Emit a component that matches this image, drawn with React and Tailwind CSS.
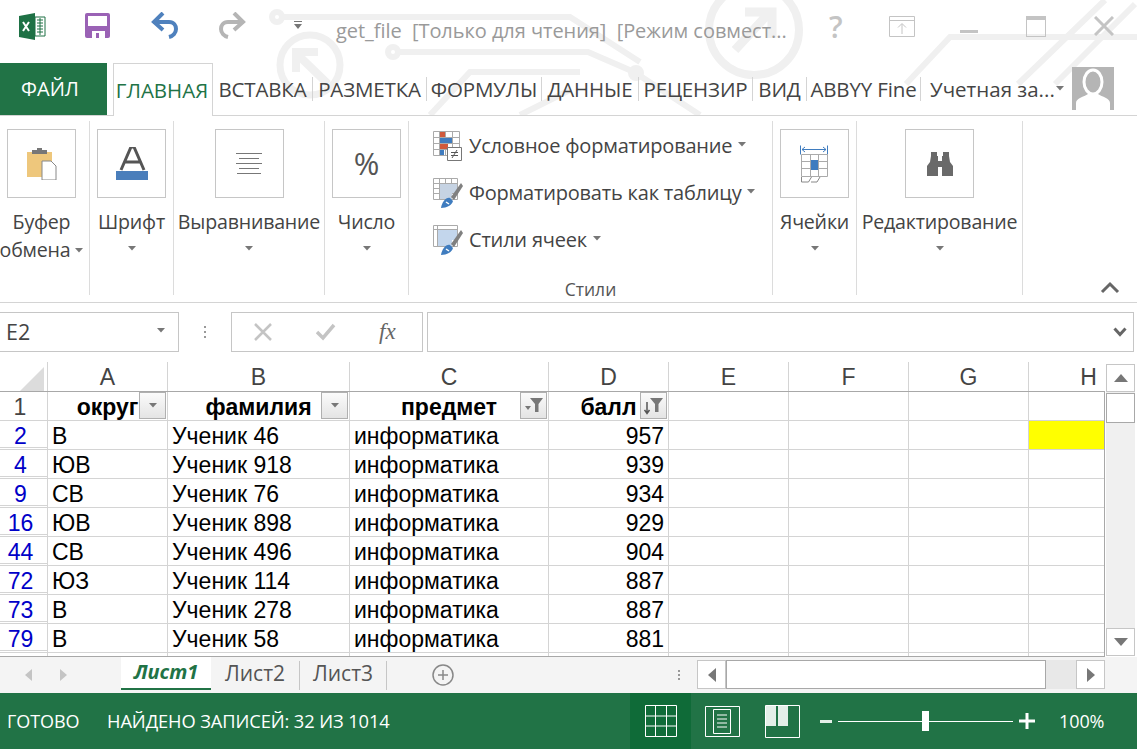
import React from 'react';

const tabs = [
  { label: 'ВСТАВКА', w: 'w-[100px]' },
  { label: 'РАЗМЕТКА', w: 'w-[114px]' },
  { label: 'ФОРМУЛЫ', w: 'w-[115px]' },
  { label: 'ДАННЫЕ', w: 'w-[97px]' },
  { label: 'РЕЦЕНЗИР', w: 'w-[114px]' },
  { label: 'ВИД', w: 'w-[54px]' },
  { label: 'ABBYY Fine', w: 'w-[114px]' },
];

const rows = [
  ['2', 'В', 'Ученик 46', 'информатика', '957'],
  ['4', 'ЮВ', 'Ученик 918', 'информатика', '939'],
  ['9', 'СВ', 'Ученик 76', 'информатика', '934'],
  ['16', 'ЮВ', 'Ученик 898', 'информатика', '929'],
  ['44', 'СВ', 'Ученик 496', 'информатика', '904'],
  ['72', 'ЮЗ', 'Ученик 114', 'информатика', '887'],
  ['73', 'В', 'Ученик 278', 'информатика', '887'],
  ['79', 'В', 'Ученик 58', 'информатика', '881'],
];

const gridCols = 'grid grid-rows-[29px] grid-cols-[48px_120px_182px_199px_120px_120px_120px_120px_120px]';

const Caret = ({ className = '' }) => (
  <svg width="8" height="5" viewBox="0 0 8 5" className={className}>
    <path d="M0 0h8L4 4.5z" fill="#777" />
  </svg>
);

const Watermark = () => (
  <svg className="absolute left-0 top-0 pointer-events-none" width="1137" height="115" viewBox="0 0 1137 115" fill="none" stroke="#f0f0f0" strokeWidth="6">
    <circle cx="277" cy="17" r="5" />
    <path d="M283 17H570L640 62" />
    <circle cx="310" cy="65" r="30" strokeWidth="7" />
    <path d="M328 84L298 55M296 72V52H318" strokeWidth="8" />
    <circle cx="393" cy="52" r="5" />
    <path d="M399 52H588L634 72L700 115" />
    <circle cx="636" cy="73" r="5" />
    <path d="M430 115L470 72H580" />
    <circle cx="754" cy="30" r="45" strokeWidth="8" />
    <path d="M735 50L768 14M745 12H772V38" strokeWidth="9" />
    <path d="M906 84L950 37H1137" />
    <path d="M1018 84L1105 0M1055 84L1135 4" />
    <path d="M520 115L570 90" />
  </svg>
);

const TitleBar = () => (
  <div className="h-[63px] flex items-start relative z-10">
    {/* excel */}
    <svg width="27" height="27" viewBox="0 0 27 27" className="ml-[19px] mt-[13px]">
      <path d="M0 3L16 0V27L0 24z" fill="#1e7145" />
      <path d="M16 4H26V23H16z" fill="#fff" stroke="#1e7145" />
      <path d="M18 7h6M18 10h6M18 13h6M18 16h6M18 19h6M21 5v17" stroke="#1e7145" strokeWidth="1" />
      <path d="M4 9l6 9M10 9l-6 9" stroke="#fff" strokeWidth="2" />
    </svg>
    {/* save */}
    <svg width="26" height="26" viewBox="0 0 26 26" className="ml-[39px] mt-[13px]">
      <rect x="0" y="0" width="25" height="25" rx="2" fill="#9a62b5" />
      <path d="M3 3H22V13H3z" fill="#fff" />
      <path d="M7 18H20V25H7z" fill="#fff" />
      <path d="M11 20H14V25H11z" fill="#9a62b5" />
    </svg>
    {/* undo */}
    <svg width="28" height="28" viewBox="0 0 28 28" className="ml-[40px] mt-[12px]" fill="none">
      <path d="M2 10H18C23 10 25 14 25 17C25 21 22 24 18 25" stroke="#4f81bd" strokeWidth="4" />
      <path d="M12 1L3 10L12 18" stroke="#4f81bd" strokeWidth="4" />
    </svg>
    {/* redo */}
    <svg width="28" height="28" viewBox="0 0 28 28" className="ml-[39px] mt-[12px]" fill="none">
      <path d="M26 10H10C5 10 3 14 3 17C3 21 6 24 10 25" stroke="#b5b5b5" strokeWidth="4" />
      <path d="M16 1L25 10L16 18" stroke="#b5b5b5" strokeWidth="4" />
    </svg>
    <svg width="8" height="9" viewBox="0 0 8 9" className="ml-[48px] mt-[21px]">
      <path d="M0 0h8v1H0zM0 3h8L4 8z" fill="#777" />
    </svg>
    <div className="ml-[34px] mt-[17px] text-[20px] leading-[28px] text-[#9a9a9a] whitespace-pre font-['Open_Sans',sans-serif] tracking-[-0.05px] w-[493px]">
      get_file  [Только для чтения]  [Режим совмест...
    </div>
    <div className="mt-[9px] text-[30px] leading-[36px] font-semibold text-[#c4c4c4] font-['Open_Sans',sans-serif] w-[60px]">?</div>
    <svg width="26" height="21" viewBox="0 0 26 21" className="mt-[16px]" fill="none" stroke="#c4c4c4">
      <path d="M.5.5h25v20H.5zM.5 4.5h25" />
      <path d="M13 18V8M9 11.5L13 7.5L17 11.5" />
    </svg>
    <div className="ml-[45px] mt-[30px] w-[18px] h-[3px] bg-[#c4c4c4]" />
    <div className="ml-[48px] mt-[16px] w-[20px] h-[21px] border border-[#c4c4c4] border-t-[4px]" />
    <svg width="20" height="20" viewBox="0 0 20 20" className="ml-[48px] mt-[16px]" stroke="#c4c4c4" strokeWidth="3">
      <path d="M1 1L19 19M19 1L1 19" />
    </svg>
  </div>
);

const TabBar = () => (
  <div className="h-[53px] flex items-end border-b border-[#d4d4d4] relative z-10 font-['Open_Sans',sans-serif]">
    <div className="w-[107px] h-[52px] bg-[#217346] text-white text-[20px] flex items-center justify-center pb-[1px] pr-[7px]">ФАЙЛ</div>
    <div className="ml-[6px] w-[100px] h-[53px] -mb-[1px] bg-white border border-b-0 border-[#d4d4d4] text-[#217346] text-[20.500px] flex items-center justify-center pr-[2px] whitespace-nowrap">ГЛАВНАЯ</div>
    {tabs.map((t) => (
      <div key={t.label} className={`${t.w} h-[52px] flex items-center`}>
        <div className="w-full h-[24px] border-r border-[#d4d4d4] flex items-center justify-center text-[20.500px] tracking-[-0.15px] text-[#444] whitespace-nowrap">{t.label}</div>
      </div>
    ))}
    <div className="ml-[9px] h-[52px] flex items-center text-[20.500px] text-[#444] whitespace-nowrap">Учетная за...</div>
    <Caret className="ml-[1px] mb-[24px]" />
    <div className="ml-[8px] mb-[5px] w-[42px] h-[43px] bg-[#b5b5b5] overflow-hidden">
      <svg width="42" height="43" viewBox="0 0 42 43">
        <ellipse cx="21" cy="15" rx="9" ry="12" fill="none" stroke="#fff" strokeWidth="3" />
        <path d="M4 43V36C4 31 12 30 16 27H26C30 30 38 31 38 36V43z" fill="#fff" />
      </svg>
    </div>
  </div>
);

const BigBtn = ({ w = 'w-[69px]', children }) => (
  <div className={`${w} h-[69px] border border-[#c6c6c6] flex items-center justify-center shrink-0`}>{children}</div>
);

const Group = ({ w, label, label2, btnClass = '', children }) => (
  <div className={`${w} shrink-0 h-[174px] flex flex-col items-center border-r border-[#dcdcdc]`}>
    <div className={`mt-[8px] ${btnClass}`}>
      <BigBtn>{children}</BigBtn>
    </div>
    <div className={`mt-[10px] text-[19.600px] leading-[28px] text-[#444] tracking-[-0.2px] whitespace-nowrap ${btnClass}`}>{label}</div>
    {label2 ? (
      <div className="flex items-center gap-[5px] text-[19.600px] leading-[28px] text-[#444] tracking-[-0.2px] whitespace-nowrap -ml-[6px]">
        {label2}
        <Caret />
      </div>
    ) : (
      <Caret className="mt-[10px]" />
    )}
  </div>
);

const StyleRow = ({ icon, label }) => (
  <div className="h-[47px] flex items-center text-[20px] tracking-[-0.2px] text-[#444] whitespace-nowrap">
    <div className="w-[36px] shrink-0">{icon}</div>
    {label}
    <Caret className="ml-[6px] mb-[3px]" />
  </div>
);

const Brush = () => (
  <>
    <path d="M28 5L18 19L21 22L30 8z" fill="#808080" />
    <path d="M8 30C9 24 13 19 17 20L20 23C19 27 14 30 8 30z" fill="#3f7cbf" />
    <path d="M13 24L16 26" stroke="#fff" strokeWidth="1.500" />
  </>
);

const Ribbon = () => (
  <div className="h-[187px] border-b border-[#d4d4d4] flex items-start pt-[5px] pl-0 font-['Open_Sans',sans-serif]">
    <Group w="w-[90px]" label="Буфер" label2="обмена" btnClass="-ml-[3px] mr-[3px]">
      <svg width="30" height="32" viewBox="0 0 30 32">
        <path d="M0 4H25V29H0z" fill="#eec77c" />
        <path d="M5 2H20V6H5zM10 0h5v3h-5z" fill="#777" />
        <path d="M15 13H24L29 18V32H15z" fill="#fff" stroke="#888" />
      </svg>
    </Group>
    <Group w="w-[84px]" label="Шрифт">
      <svg width="34" height="34" viewBox="0 0 34 34">
        <path d="M6 23L16 0H19L29 23M10 15H25" fill="none" stroke="#555" strokeWidth="3" />
        <path d="M1 24H33V33H1z" fill="#4a7ebb" />
      </svg>
    </Group>
    <Group w="w-[151px]" label="Выравнивание">
      <svg width="26" height="22" viewBox="0 0 26 22" stroke="#777">
        <path d="M0 .5h26M3 5.500h20M0 10.500h26M3 15.500h20M1 20.500h24" />
      </svg>
    </Group>
    <Group w="w-[84px]" label="Число">
      <span className="text-[31px] text-[#555] leading-none">%</span>
    </Group>
    <div className="w-[364px] shrink-0 h-[174px] border-r border-[#dcdcdc] flex flex-col">
      <div className="pl-[24px] pt-[1px] h-[156px] shrink-0">
        <StyleRow
          label="Условное форматирование"
          icon={
            <svg width="30" height="30" viewBox="0 0 30 30">
              <path d="M.5.500h26v24H.5zM.5 6.500h26M.5 12.500h26M.5 18.500h26M6.500.500v24M12.500.500v24M19.500.500v24" fill="#fff" stroke="#aaa" />
              <path d="M7 1h5v5H7z" fill="#d05a3c" />
              <path d="M7 7h12v5H7z" fill="#3f7cbf" />
              <path d="M7 13h8v5H7z" fill="#d05a3c" />
              <path d="M7 19h4v5H7z" fill="#3f7cbf" />
              <path d="M14.500 16.500h14v13h-14z" fill="#fff" stroke="#777" />
              <path d="M18 21.500h7M18 24.500h7M24 19l-5 8" stroke="#555" fill="none" />
            </svg>
          }
        />
        <StyleRow
          label="Форматировать как таблицу"
          icon={
            <svg width="30" height="30" viewBox="0 0 30 30">
              <path d="M.5.500h24v21H.5zM.5 5.500h24M.5 10.500h24M.5 15.500h24M6.500.500v21M12.500.500v21M18.500.500v21" fill="#fff" stroke="#aaa" />
              <path d="M7 6H24V15H19V21H7z" fill="#c6d3e3" />
              <Brush />
            </svg>
          }
        />
        <StyleRow
          label="Стили ячеек"
          icon={
            <svg width="30" height="30" viewBox="0 0 30 30">
              <path d="M.5.500h24v21H.5zM.5 4.500h24M4.500.500v21" fill="#fff" stroke="#aaa" />
              <path d="M5 5H24V15H19V21H5z" fill="#c3d6ec" />
              <Brush />
            </svg>
          }
        />
      </div>
      <div className="text-center text-[17.500px] leading-[24px] text-[#555] shrink-0">Стили</div>
    </div>
    <Group w="w-[84px]" label="Ячейки">
      <svg width="30" height="40" viewBox="0 0 30 40" fill="none">
        <path d="M2 5.500h24M5 3L2 5.500L5 8M23 3l3 2.500L23 8" stroke="#3f7cbf" />
        <path d="M.5.500v9M27.500.500v9" stroke="#3f7cbf" transform="translate(0 1)" />
        <path d="M1.500 10.500h26v22h-26zM1.500 17.500h26M1.500 24.500h26M10.500 10.500v22M18.500 10.500v22" stroke="#aaa" />
        <path d="M11 16H18V26H11z" fill="#3f7cbf" />
        <path d="M1.500 33v5h7l3-5M11 38h6l3-5" stroke="#888" />
      </svg>
    </Group>
    <Group w="w-[166px]" label="Редактирование">
      <svg width="26" height="24" viewBox="0 0 26 24">
        <path d="M4 0H10V4H11V9H15V4H16V0H22V4L23 10L26 14V24H15V15H11V24H0V14L3 10L4 4z" fill="#6a6a6a" />
        <path d="M12.500 0v5" stroke="#fff" />
      </svg>
    </Group>
    <div className="flex-1 h-[174px] flex items-end justify-end pr-[17px] pb-[1px]">
      <svg width="20" height="13" viewBox="0 0 20 13" fill="none">
        <path d="M2 11L10 3L18 11" stroke="#666" strokeWidth="3" />
      </svg>
    </div>
  </div>
);

const FormulaBar = () => (
  <div className="h-[59px] flex items-center pb-[2px] font-['Open_Sans',sans-serif]">
    <div className="w-[179px] h-[40px] border border-l-0 border-[#c6c6c6] flex items-center justify-between pl-[6px] pr-[13px] pt-[2px] text-[21.500px] text-[#444]">
      E2
      <Caret className="mb-[4px]" />
    </div>
    <div className="w-[52px] flex flex-col items-center gap-[3px]">
      <span className="w-[2px] h-[2px] bg-[#999]" />
      <span className="w-[2px] h-[2px] bg-[#999]" />
      <span className="w-[2px] h-[2px] bg-[#999]" />
    </div>
    <div className="w-[192px] h-[40px] border border-[#c6c6c6] flex items-center pl-[22px]">
      <svg width="18" height="18" viewBox="0 0 18 18" stroke="#c4c4c4" strokeWidth="2.500">
        <path d="M1 1L17 17M17 1L1 17" />
      </svg>
      <svg width="20" height="18" viewBox="0 0 20 18" fill="none" stroke="#c4c4c4" strokeWidth="3.500" className="ml-[44px]">
        <path d="M1 9L7 15L18 2" />
      </svg>
      <span className="ml-[43px] text-[#666] italic text-[23px] leading-none font-['Liberation_Serif',serif]">fx</span>
    </div>
    <div className="ml-[4px] w-[707px] h-[40px] border border-[#c6c6c6] flex items-center justify-end pr-[6px]">
      <svg width="14" height="10" viewBox="0 0 14 10" fill="none">
        <path d="M1.500 1.500L7 7.500L12.500 1.500" stroke="#666" strokeWidth="3" />
      </svg>
    </div>
  </div>
);

const FilterBtn = ({ children }) => (
  <div className="absolute right-[1px] top-0 w-[27px] h-[27px] border border-[#b0b0b0] bg-linear-to-b from-[#fbfbfb] to-[#e4e4e4] flex items-center justify-center">
    {children}
  </div>
);

const FunnelIcon = ({ sort }) => (
  <svg width="20" height="18" viewBox="0 0 20 18">
    <path d="M6 1H19L14.500 7V15H11V7z" fill="#777" />
    {sort ? <path d="M3 5v11M.5 13L3 16.500L5.500 13" fill="none" stroke="#555" strokeWidth="1.500" /> : <path d="M1 9h6L4 13z" fill="#777" />}
  </svg>
);

const Sheet = () => (
  <div className="h-[295px] flex font-['Liberation_Sans',sans-serif]">
    <div className="w-[1105px] overflow-hidden">
      {/* column letters */}
      <div className={`${gridCols} h-[29px] text-[23px] leading-[30px] text-[#444] text-center`}>
        <div className="border-r border-[#d4d4d4] relative overflow-hidden">
          <svg width="24" height="24" viewBox="0 0 24 24" className="absolute right-[3px] bottom-0">
            <path d="M24 0V24H0z" fill="#dcdcdc" />
          </svg>
        </div>
        {['A', 'B', 'C', 'D', 'E', 'F', 'G', 'H'].map((c) => (
          <div key={c} className="border-r border-[#d4d4d4]">{c}</div>
        ))}
      </div>
      <div className="h-[266px] border-t border-b border-r border-[#a8a8a8] overflow-hidden text-[23px] text-black">
        {/* header row */}
        <div className={`${gridCols} h-[29px] leading-[30px]`}>
          <div className="text-[#444] text-center pr-[7px] border-r border-b border-[#d4d4d4]">1</div>
          {[
            { t: 'округ', icon: <Caret /> },
            { t: 'фамилия', icon: <Caret /> },
            { t: 'предмет', icon: <FunnelIcon /> },
            { t: 'балл', icon: <FunnelIcon sort /> },
          ].map((h) => (
            <div key={h.t} className="relative font-bold text-center border-r border-b border-[#d4d4d4] overflow-hidden">
              {h.t}
              <FilterBtn>{h.icon}</FilterBtn>
            </div>
          ))}
          {[0, 1, 2, 3].map((i) => (
            <div key={i} className="border-r border-b border-[#d4d4d4]" />
          ))}
        </div>
        {rows.map((r, idx) => (
          <div key={r[0]} className={`${gridCols} h-[29px] leading-[30px]`}>
            <div className="text-[#0000c8] text-center pr-[6px] border-r border-b-[3px] border-double border-[#d4d4d4]">{r[0]}</div>
            <div className="pl-[4px] border-r border-b border-[#d4d4d4]">{r[1]}</div>
            <div className="pl-[4px] border-r border-b border-[#d4d4d4]">{r[2]}</div>
            <div className="pl-[4px] border-r border-b border-[#d4d4d4]">{r[3]}</div>
            <div className="pr-[4px] text-right border-r border-b border-[#d4d4d4]">{r[4]}</div>
            <div className="border-r border-b border-[#d4d4d4]" />
            <div className="border-r border-b border-[#d4d4d4]" />
            <div className="border-r border-b border-[#d4d4d4]" />
            <div className={`border-b border-[#d4d4d4] ${idx === 0 ? 'bg-[#ffff00]' : ''}`} />
          </div>
        ))}
        <div className={`${gridCols} h-[29px]`}>
          {[0, 1, 2, 3, 4, 5, 6, 7].map((i) => (
            <div key={i} className="border-r border-[#d4d4d4]" />
          ))}
        </div>
      </div>
    </div>
    {/* vertical scrollbar */}
    <div className="w-[32px] flex flex-col pl-[1px] pr-[2px] pt-[2px] pb-[1px]">
      <div className="h-[28px] border border-[#c6c6c6] flex items-center justify-center">
        <svg width="14" height="8" viewBox="0 0 14 8"><path d="M7 0L14 8H0z" fill="#777" /></svg>
      </div>
      <div className="flex-1 bg-[#f0f0f0] pt-[1px]">
        <div className="h-[30px] bg-white border border-[#a8a8a8]" />
      </div>
      <div className="h-[28px] border border-[#c6c6c6] flex items-center justify-center">
        <svg width="14" height="8" viewBox="0 0 14 8"><path d="M0 0H14L7 8z" fill="#777" /></svg>
      </div>
    </div>
  </div>
);

const SheetTabs = () => (
  <div className="h-[36px] bg-[#f4f4f4] flex items-start font-['Open_Sans',sans-serif]">
    <svg width="7" height="12" viewBox="0 0 7 12" className="ml-[25px] mt-[12px]"><path d="M7 0V12L0 6z" fill="#c4c4c4" /></svg>
    <svg width="7" height="12" viewBox="0 0 7 12" className="ml-[28px] mt-[12px]"><path d="M0 0V12L7 6z" fill="#c4c4c4" /></svg>
    <div className="ml-[54px] w-[90px] h-[33px] bg-white border-b-[2px] border-[#217346] text-[#217346] font-bold italic text-[20px] leading-[30px] text-center">Лист1</div>
    <div className="w-[89px] h-[29px] mt-[4px] border-r border-[#c6c6c6] text-[21px] leading-[24px] text-[#555] text-center">Лист2</div>
    <div className="w-[87px] h-[29px] mt-[4px] border-r border-[#c6c6c6] text-[21px] leading-[24px] text-[#555] text-center">Лист3</div>
    <svg width="22" height="22" viewBox="0 0 22 22" className="ml-[45px] mt-[7px]" fill="none" stroke="#888">
      <circle cx="11" cy="11" r="10" strokeWidth="1.500" />
      <path d="M11 6V16M6 11H16" strokeWidth="1.500" />
    </svg>
    <div className="ml-[224px] mt-[13px] flex flex-col gap-[2px]">
      <span className="w-[2px] h-[2px] bg-[#999]" />
      <span className="w-[2px] h-[2px] bg-[#999]" />
      <span className="w-[2px] h-[2px] bg-[#999]" />
    </div>
    <div className="ml-[17px] mt-[3px] w-[409px] h-[29px] flex">
      <div className="w-[29px] bg-white border border-[#c6c6c6] flex items-center justify-center">
        <svg width="8" height="14" viewBox="0 0 8 14"><path d="M8 0V14L0 7z" fill="#777" /></svg>
      </div>
      <div className="w-[320px] bg-white border border-[#a8a8a8]" />
      <div className="w-[30px] bg-[#e8e8e8]" />
      <div className="w-[29px] bg-white border border-[#c6c6c6] flex items-center justify-center">
        <svg width="8" height="14" viewBox="0 0 8 14"><path d="M0 0V14L8 7z" fill="#777" /></svg>
      </div>
    </div>
  </div>
);

const StatusBar = () => (
  <div className="h-[56px] bg-[#217346] text-white flex items-center text-[18px] font-['Open_Sans',sans-serif] tracking-[-0.1px]">
    <span className="ml-[7px] w-[100px]">ГОТОВО</span>
    <span className="w-[523px] whitespace-nowrap text-[18.300px]">НАЙДЕНО ЗАПИСЕЙ: 32 ИЗ 1014</span>
    <div className="w-[61px] h-[56px] bg-[#0f6b38] flex items-center justify-center">
      <svg width="32" height="32" viewBox="0 0 32 32" fill="none" stroke="#fff">
        <path d="M.5.500h31v31H.5zM.5 11h31M.5 21h31M10.500.500v31M21.500.500v31" />
      </svg>
    </div>
    <svg width="35" height="31" viewBox="0 0 35 31" fill="none" stroke="#fff" className="ml-[14px]">
      <path d="M.5.500h34v30H.5zM8.500 3.500h17v24h-17zM12 9h10M12 13h10M12 17h10M12 21h10" />
    </svg>
    <svg width="35" height="33" viewBox="0 0 35 33" className="ml-[25px]">
      <path d="M.5.500h34v32H.5z" fill="none" stroke="#fff" />
      <path d="M1 1H11V21H1zM13 1H23V21H13z" fill="#e4efe8" />
    </svg>
    <div className="ml-[20px] w-[12px] h-[3px] bg-[#e4efe8]" />
    <div className="ml-[6px] w-[175px] h-[1px] bg-white relative">
      <div className="absolute left-[84px] -top-[10px] w-[7px] h-[20px] bg-white" />
    </div>
    <svg width="16" height="16" viewBox="0 0 16 16" className="ml-[6px]" stroke="#fff" strokeWidth="3">
      <path d="M0 8H16M8 0V16" />
    </svg>
    <span className="ml-[24px]">100%</span>
  </div>
);

export default function App() {
  return (
    <div className="w-[1137px] h-[749px] overflow-hidden bg-white flex flex-col relative">
      <Watermark />
      <TitleBar />
      <TabBar />
      <Ribbon />
      <FormulaBar />
      <Sheet />
      <SheetTabs />
      <StatusBar />
    </div>
  );
}
